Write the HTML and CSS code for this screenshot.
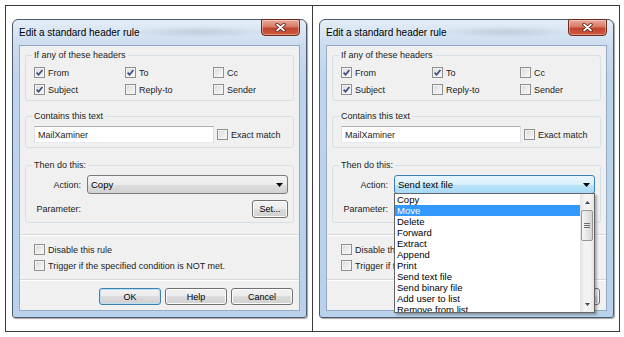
FILE: index.html
```html
<!DOCTYPE html>
<html>
<head>
    <meta charset="UTF-8">
    <title>Edit a standard header rule</title>
    <link rel="stylesheet" href="styles.css">
</head>
<body>
    <div class="sheet">
        <!-- 左: 閉じた状態 -->
        <div class="cell">
            <div class="window">
                <div class="titlebar">
                    <span class="title">Edit a standard header rule</span>
                    <span class="close">
                        <svg width="11" height="9" viewBox="0 0 11 9"><path d="M2 1.5 L9 7.5 M9 1.5 L2 7.5" stroke="#5b2216" stroke-width="3.4" stroke-linecap="round"/><path d="M2 1.5 L9 7.5 M9 1.5 L2 7.5" stroke="#fff" stroke-width="1.7" stroke-linecap="round"/></svg>
                    </span>
                </div>
                <div class="client">
                    <fieldset>
                        <legend>If any of these headers</legend>
                        <div class="headers">
                            <label class="check"><span class="cb"><svg viewBox="0 0 9 9"><path d="M1.6 4.6 L3.6 6.8 L7.4 1.9" fill="none" stroke="#3b4c82" stroke-width="1.6"/></svg></span>From</label>
                            <label class="check"><span class="cb"><svg viewBox="0 0 9 9"><path d="M1.6 4.6 L3.6 6.8 L7.4 1.9" fill="none" stroke="#3b4c82" stroke-width="1.6"/></svg></span>To</label>
                            <label class="check"><span class="cb"></span>Cc</label>
                            <label class="check"><span class="cb"><svg viewBox="0 0 9 9"><path d="M1.6 4.6 L3.6 6.8 L7.4 1.9" fill="none" stroke="#3b4c82" stroke-width="1.6"/></svg></span>Subject</label>
                            <label class="check"><span class="cb"></span>Reply-to</label>
                            <label class="check"><span class="cb"></span>Sender</label>
                        </div>
                    </fieldset>

                    <fieldset class="gap10">
                        <legend>Contains this text</legend>
                        <div class="text-row">
                            <span class="textbox">MailXaminer</span>
                            <label class="check"><span class="cb"></span>Exact match</label>
                        </div>
                    </fieldset>

                    <fieldset class="gap12 actions">
                        <legend>Then do this:</legend>
                        <div class="action-grid">
                            <span class="field-label">Action:</span>
                            <div class="combo">
                                <span>Copy</span>
                                <svg width="7" height="4" viewBox="0 0 7 4"><path d="M0 0 H7 L3.5 4 Z" fill="#000"/></svg>
                            </div>
                            <span class="field-label">Parameter:</span>
                            <span class="btn set">Set...</span>
                        </div>
                    </fieldset>

                    <div class="separator first"></div>
                    <div class="options">
                        <label class="check"><span class="cb"></span>Disable this rule</label>
                        <label class="check"><span class="cb"></span>Trigger if the specified condition is NOT met.</label>
                    </div>
                    <div class="separator"></div>

                    <div class="buttons">
                        <span class="btn default">OK</span>
                        <span class="btn">Help</span>
                        <span class="btn">Cancel</span>
                    </div>
                </div>
            </div>
        </div>

        <!-- 右: ドロップダウンを開いた状態 -->
        <div class="cell">
            <div class="window">
                <div class="titlebar">
                    <span class="title">Edit a standard header rule</span>
                    <span class="close">
                        <svg width="11" height="9" viewBox="0 0 11 9"><path d="M2 1.5 L9 7.5 M9 1.5 L2 7.5" stroke="#5b2216" stroke-width="3.4" stroke-linecap="round"/><path d="M2 1.5 L9 7.5 M9 1.5 L2 7.5" stroke="#fff" stroke-width="1.7" stroke-linecap="round"/></svg>
                    </span>
                </div>
                <div class="client">
                    <fieldset>
                        <legend>If any of these headers</legend>
                        <div class="headers">
                            <label class="check"><span class="cb"><svg viewBox="0 0 9 9"><path d="M1.6 4.6 L3.6 6.8 L7.4 1.9" fill="none" stroke="#3b4c82" stroke-width="1.6"/></svg></span>From</label>
                            <label class="check"><span class="cb"><svg viewBox="0 0 9 9"><path d="M1.6 4.6 L3.6 6.8 L7.4 1.9" fill="none" stroke="#3b4c82" stroke-width="1.6"/></svg></span>To</label>
                            <label class="check"><span class="cb"></span>Cc</label>
                            <label class="check"><span class="cb"><svg viewBox="0 0 9 9"><path d="M1.6 4.6 L3.6 6.8 L7.4 1.9" fill="none" stroke="#3b4c82" stroke-width="1.6"/></svg></span>Subject</label>
                            <label class="check"><span class="cb"></span>Reply-to</label>
                            <label class="check"><span class="cb"></span>Sender</label>
                        </div>
                    </fieldset>

                    <fieldset class="gap10">
                        <legend>Contains this text</legend>
                        <div class="text-row">
                            <span class="textbox">MailXaminer</span>
                            <label class="check"><span class="cb"></span>Exact match</label>
                        </div>
                    </fieldset>

                    <fieldset class="gap12 actions">
                        <legend>Then do this:</legend>
                        <div class="action-grid">
                            <span class="field-label">Action:</span>
                            <div class="combo focus">
                                <span>Send text file</span>
                                <svg width="7" height="4" viewBox="0 0 7 4"><path d="M0 0 H7 L3.5 4 Z" fill="#000"/></svg>
                                <div class="droplist">
                                    <ul class="items">
                                        <li>Copy</li>
                                        <li class="selected">Move</li>
                                        <li>Delete</li>
                                        <li>Forward</li>
                                        <li>Extract</li>
                                        <li>Append</li>
                                        <li>Print</li>
                                        <li>Send text file</li>
                                        <li>Send binary file</li>
                                        <li>Add user to list</li>
                                        <li>Remove from list</li>
                                    </ul>
                                    <div class="sbar">
                                        <span class="sb-btn"><svg width="5" height="3" viewBox="0 0 5 3"><path d="M0 3 H5 L2.5 0 Z" fill="#4a4a4a"/></svg></span>
                                        <span class="thumb"><i></i><i></i><i></i></span>
                                        <span class="sb-track"></span>
                                        <span class="sb-btn"><svg width="5" height="3" viewBox="0 0 5 3"><path d="M0 0 H5 L2.5 3 Z" fill="#4a4a4a"/></svg></span>
                                    </div>
                                </div>
                            </div>
                            <span class="field-label">Parameter:</span>
                            <span class="btn set">Set...</span>
                        </div>
                    </fieldset>

                    <div class="separator first"></div>
                    <div class="options">
                        <label class="check"><span class="cb"></span>Disable this rule</label>
                        <label class="check"><span class="cb"></span>Trigger if the specified condition is NOT met.</label>
                    </div>
                    <div class="separator"></div>

                    <div class="buttons">
                        <span class="btn default">OK</span>
                        <span class="btn">Help</span>
                        <span class="btn">Cancel</span>
                    </div>
                </div>
            </div>
        </div>
    </div>
</body>
</html>
```

FILE: styles.css
```css
* {
    box-sizing: border-box;
    margin: 0;
    padding: 0;
}

body {
    background: #fff;
    font-family: "Liberation Sans", Arial, sans-serif;
    font-size: 9px;
    color: #1b1b1b;
}

.sheet {
    margin: 5px 0 0 5px;
    width: 615px;
    height: 327px;
    border: 1px solid #3b3b3b;
    display: flex;
}

.cell {
    flex: 0 0 306px;
    padding: 13px 0 0 6px;
}

.cell + .cell {
    flex-basis: 307px;
    border-left: 1px solid #3b3b3b;
}

/* ウィンドウ枠 */
.window {
    width: 295px;
    height: 299px;
    border: 1px solid #4a5a6c;
    border-radius: 6px 6px 3px 3px;
    background: linear-gradient(#e4edf7, #cbdcef 26px, #bed4ec 60px, #bad1eb);
    padding: 0 6px 6px;
    display: flex;
    flex-direction: column;
    box-shadow: 1px 1px 1px rgba(0,0,0,0.35);
}

.titlebar {
    height: 25px;
    display: flex;
    align-items: center;
    justify-content: space-between;
    background: radial-gradient(ellipse 70px 6px at 180px 12px, rgba(110,120,135,0.22), transparent);
}

.title {
    font-size: 10px;
    color: #000;
}

.close {
    align-self: flex-start;
    margin-top: -1px;
    width: 39px;
    height: 17px;
    border: 1px solid #6b2b1f;
    border-radius: 2px 2px 4px 4px;
    background: linear-gradient(#e9a99b, #d67a66 45%, #c2452f 55%, #cf5a3c);
    box-shadow: inset 0 0 0 1px rgba(255,255,255,0.35);
    display: flex;
    align-items: center;
    justify-content: center;
}

.client {
    height: 266px;
    background: #f0f0f0;
    border: 1px solid #93a9c4;
    padding-top: 4px;
}

/* グループボックス */
fieldset {
    border: 1px solid #d5dfe5;
    border-radius: 3px;
    margin: 0 5px;
    padding: 5px 5px 4px 8px;
    min-width: 0;
}

legend {
    padding: 0 2px;
    margin-left: -2px;
    line-height: 11px;
}

.gap10 {
    margin-top: 10px;
    padding-top: 4px;
}

.gap12 {
    margin-top: 12px;
    padding-top: 4px;
}

.headers {
    display: grid;
    grid-template-columns: 91px 88px auto;
    grid-auto-rows: 13px;
    row-gap: 4px;
}

.check {
    display: flex;
    align-items: center;
    gap: 3px;
    height: 13px;
    white-space: nowrap;
}

.cb {
    flex: none;
    width: 11px;
    height: 11px;
    border: 1px solid #8f8f8f;
    background: linear-gradient(135deg, #d9dadb, #f9f9f9);
    box-shadow: inset 0 0 0 1px #f4f4f4;
    display: flex;
    align-items: center;
    justify-content: center;
}

.cb svg {
    width: 9px;
    height: 9px;
}

.text-row {
    display: flex;
    align-items: center;
    gap: 3px;
}

.textbox {
    width: 180px;
    height: 17px;
    border: 1px solid #abadb3;
    border-color: #abadb3 #dbdfe6 #e3e9ef #e2e3ea;
    background: #fff;
    padding-left: 3px;
    display: flex;
    align-items: center;
}

.actions {
    padding-right: 5px;
}

.action-grid {
    display: grid;
    grid-template-columns: 47px 1fr;
    column-gap: 6px;
    row-gap: 6px;
    align-items: center;
}

.field-label {
    text-align: right;
}

.combo {
    position: relative;
    height: 19px;
    border: 1px solid #7a7a7a;
    border-radius: 3px;
    background: linear-gradient(#f3f3f3, #ebebeb 50%, #dedede 50%, #d2d2d2);
    display: flex;
    align-items: center;
    justify-content: space-between;
    padding: 0 4px 0 3px;
    font-size: 9.5px;
    color: #000;
}

.combo.focus {
    border-color: #3c7fb1;
    background: linear-gradient(#eaf6fd, #d9f0fc 50%, #bee6fd 50%, #a7d9f5);
}

.btn {
    display: flex;
    align-items: center;
    justify-content: center;
    height: 17px;
    border: 1px solid #707070;
    border-radius: 3px;
    background: linear-gradient(#f2f2f2, #ebebeb 50%, #dddddd 50%, #cfcfcf);
    box-shadow: inset 0 0 0 1px #fbfbfb;
    color: #000;
}

.btn.set {
    justify-self: end;
    width: 36px;
    height: 18px;
}

.btn.default {
    border-color: #3c7fb1;
    box-shadow: inset 0 0 0 1px #b8e0f7;
}

.separator {
    height: 2px;
    border-top: 1px solid #d7d7d7;
    border-bottom: 1px solid #fff;
}

.separator.first {
    margin-top: 11px;
}

.options {
    display: flex;
    flex-direction: column;
    gap: 3px;
    padding-left: 14px;
    margin-top: 7px;
    margin-bottom: 7px;
}

.buttons {
    display: flex;
    justify-content: flex-end;
    gap: 4px;
    padding-right: 6px;
    margin-top: 7px;
}

.buttons .btn {
    width: 62px;
}

/* ドロップダウンリスト */
.droplist {
    position: absolute;
    top: 17px;
    left: -1px;
    width: 201px;
    height: 120px;
    border: 1px solid #646464;
    background: #fff;
    display: flex;
    overflow: hidden;
    box-shadow: 2px 2px 2px rgba(0,0,0,0.28);
    z-index: 2;
    font-size: 9.5px;
}

.items {
    list-style: none;
    flex: 1;
}

.items li {
    height: 11px;
    line-height: 11px;
    padding-left: 2px;
    white-space: nowrap;
}

.items li.selected {
    background: #3399ff;
    color: #fff;
}

.sbar {
    width: 14px;
    display: flex;
    flex-direction: column;
    align-items: center;
    background: linear-gradient(90deg, #e2e2e2, #f3f3f3 30%, #f3f3f3 70%, #e6e6e6);
}

.sb-btn {
    height: 16px;
    flex: none;
    display: flex;
    align-items: center;
    justify-content: center;
}

.thumb {
    width: 12px;
    height: 31px;
    flex: none;
    border: 1px solid #979797;
    border-radius: 2px;
    background: linear-gradient(90deg, #f5f5f5, #e6e6e6 50%, #d5d5d5);
    display: flex;
    flex-direction: column;
    align-items: center;
    justify-content: center;
    gap: 1px;
}

.thumb i {
    width: 6px;
    height: 1px;
    background: #6d6d6d;
}

.sb-track {
    flex: 1;
}
```
